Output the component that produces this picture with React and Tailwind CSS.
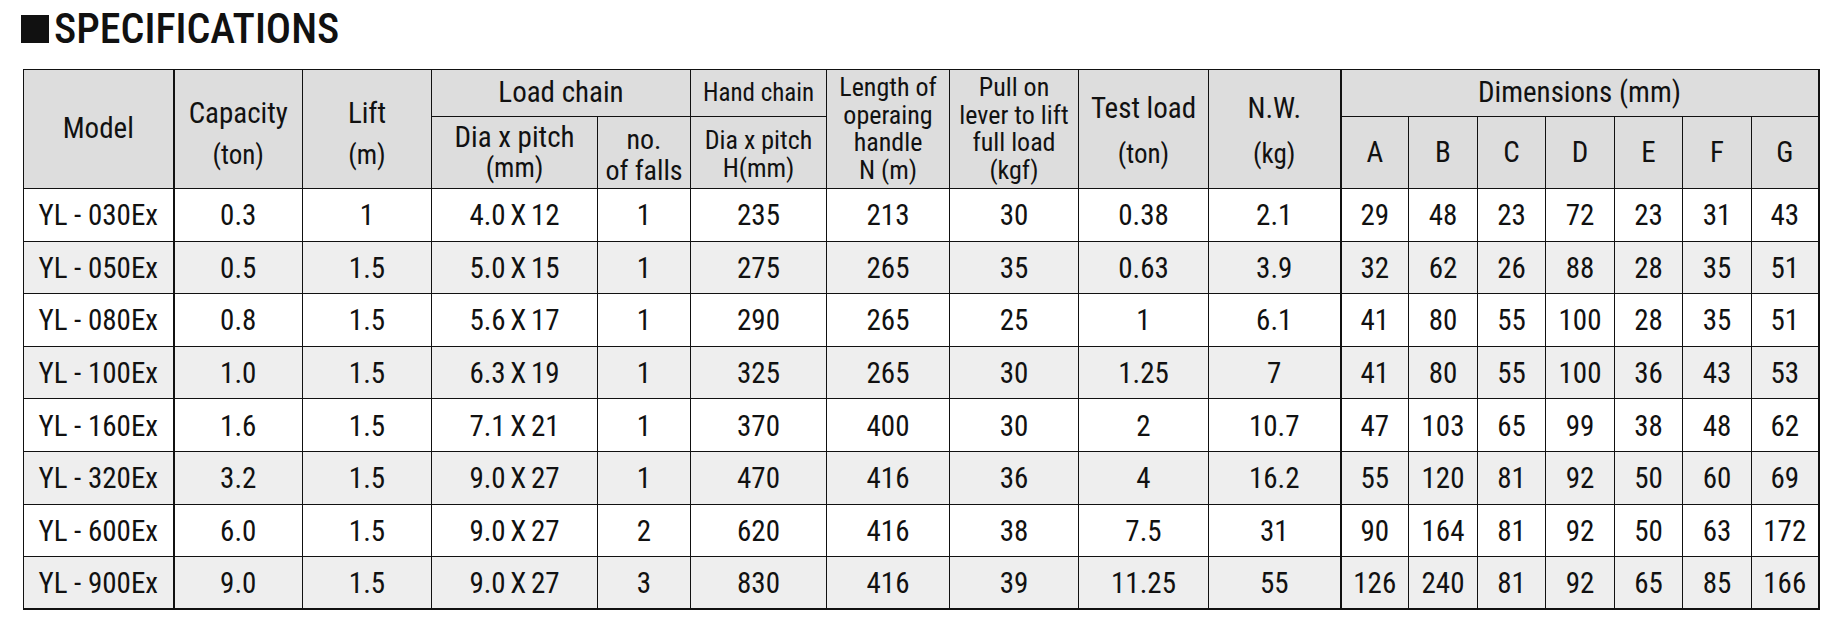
const rows = [
  ["YL - 030Ex", "0.3", "1", "4.0 X 12", "1", "235", "213", "30", "0.38", "2.1", "29", "48", "23", "72", "23", "31", "43"],
  ["YL - 050Ex", "0.5", "1.5", "5.0 X 15", "1", "275", "265", "35", "0.63", "3.9", "32", "62", "26", "88", "28", "35", "51"],
  ["YL - 080Ex", "0.8", "1.5", "5.6 X 17", "1", "290", "265", "25", "1", "6.1", "41", "80", "55", "100", "28", "35", "51"],
  ["YL - 100Ex", "1.0", "1.5", "6.3 X 19", "1", "325", "265", "30", "1.25", "7", "41", "80", "55", "100", "36", "43", "53"],
  ["YL - 160Ex", "1.6", "1.5", "7.1 X 21", "1", "370", "400", "30", "2", "10.7", "47", "103", "65", "99", "38", "48", "62"],
  ["YL - 320Ex", "3.2", "1.5", "9.0 X 27", "1", "470", "416", "36", "4", "16.2", "55", "120", "81", "92", "50", "60", "69"],
  ["YL - 600Ex", "6.0", "1.5", "9.0 X 27", "2", "620", "416", "38", "7.5", "31", "90", "164", "81", "92", "50", "63", "172"],
  ["YL - 900Ex", "9.0", "1.5", "9.0 X 27", "3", "830", "416", "39", "11.25", "55", "126", "240", "81", "92", "65", "85", "166"],
];

const colWidths = [150, 129, 129, 166, 93, 136, 123, 129, 130, 132, 68, 69, 68, 69, 68, 69, 67];

const cell = "border border-[#111] text-center align-middle p-0";

export default function App() {
  return (
    <div className="bg-white min-h-[632px] pl-[21px] pt-[7px] text-[#111] font-['Roboto',sans-serif] [font-stretch:75%]">
      <div className="flex items-center h-[43px] gap-[5px]">
        <span className="block w-[28px] h-[28px] bg-[#111]" />
        <h1 className="text-[42px] leading-none font-medium">SPECIFICATIONS</h1>
      </div>
      <table className="ml-[2px] mt-[19px] w-[1795px] table-fixed border-collapse border-r-2 border-b-2 border-[#111]">
        <colgroup>
          {colWidths.map((w, i) => (
            <col key={i} style={{ width: w }} />
          ))}
        </colgroup>
        <thead>
          <tr className="h-[47px] bg-[#dddddd]">
            <th rowSpan={2} className={`${cell} border-r-2 text-[29px] font-normal`}>Model</th>
            <th rowSpan={2} className={`${cell} text-[29px] font-normal leading-[41px] pt-[10px]`}>
              Capacity
              <br />
              <span className="text-[27px]">(ton)</span>
            </th>
            <th rowSpan={2} className={`${cell} text-[29px] font-normal leading-[41px] pt-[10px]`}>
              Lift
              <br />
              <span className="text-[27px]">(m)</span>
            </th>
            <th colSpan={2} className={`${cell} text-[29px] font-normal`}>Load chain</th>
            <th className={`${cell} text-[25px] font-normal`}>Hand chain</th>
            <th rowSpan={2} className={`${cell} text-[26px] font-normal leading-[27.5px]`}>
              Length of
              <br />
              operaing
              <br />
              handle
              <br />N (m)
            </th>
            <th rowSpan={2} className={`${cell} text-[26px] font-normal leading-[27.5px]`}>
              Pull on
              <br />
              lever to lift
              <br />
              full load
              <br />
              (kgf)
            </th>
            <th rowSpan={2} className={`${cell} text-[29px] font-normal leading-[45px] pt-[4px]`}>
              Test load
              <br />
              <span className="text-[27px]">(ton)</span>
            </th>
            <th rowSpan={2} className={`${cell} border-r-2 text-[29px] font-normal leading-[45px] pt-[4px]`}>
              N.W.
              <br />
              <span className="text-[27px]">(kg)</span>
            </th>
            <th colSpan={7} className={`${cell} text-[29px] font-normal`}>Dimensions (mm)</th>
          </tr>
          <tr className="h-[72px] bg-[#dddddd]">
            <th className={`${cell} text-[29px] font-normal leading-[30px]`}>
              Dia x pitch
              <br />
              <span className="text-[27px]">(mm)</span>
            </th>
            <th className={`${cell} text-[28px] font-normal leading-[31px] pt-[5px]`}>
              no.
              <br />
              of falls
            </th>
            <th className={`${cell} text-[26px] font-normal leading-[28px] pt-[3px]`}>
              Dia x pitch
              <br />
              H(mm)
            </th>
            {["A", "B", "C", "D", "E", "F", "G"].map((l) => (
              <th key={l} className={`${cell} text-[29px] font-normal`}>{l}</th>
            ))}
          </tr>
        </thead>
        <tbody>
          {rows.map((r, ri) => (
            <tr key={ri} className={`h-[52.6px] ${ri % 2 === 1 ? "bg-[#eeeeee]" : "bg-white"}`}>
              {r.map((v, ci) => (
                <td
                  key={ci}
                  className={`${cell} text-[29px] leading-none pt-[2px] ${ci === 3 ? "[word-spacing:-2px]" : ""} ${ci === 0 || ci === 9 ? "border-r-2" : ""}`}
                >
                  {v}
                </td>
              ))}
            </tr>
          ))}
        </tbody>
      </table>
    </div>
  );
}
